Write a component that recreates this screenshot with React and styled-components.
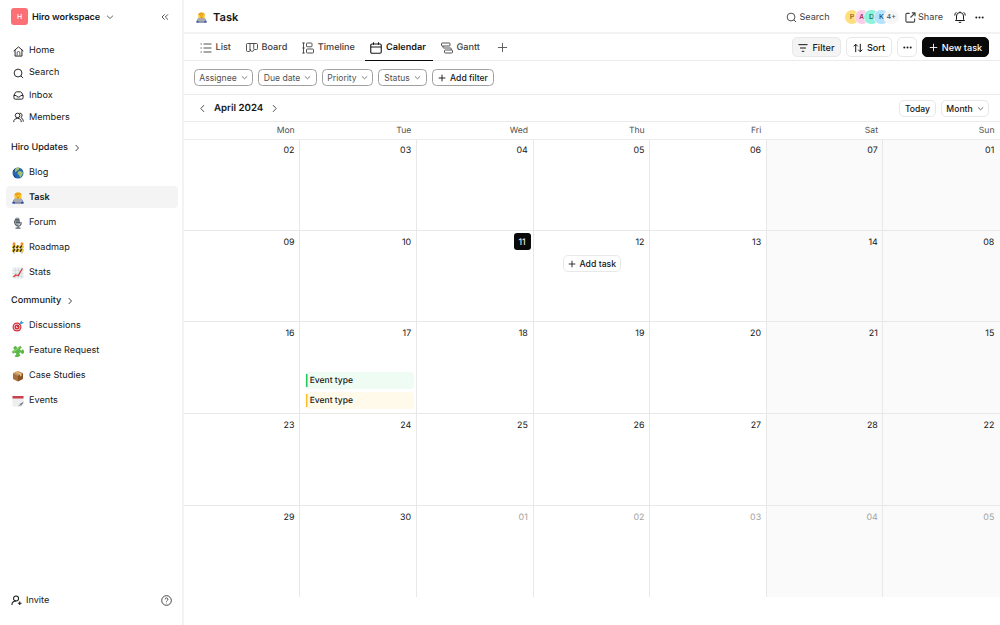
import React from "react";
import styled, { createGlobalStyle } from "styled-components";

const strokes = {
  home: (
    <>
      <path d="M1.500 11 12 2l10.500 9M4.500 9v13h15V9" />
      <path d="M9 21v-6a3 3 0 0 1 6 0v6" strokeWidth="1.500" />
    </>
  ),
  search: (
    <>
      <circle cx="11" cy="11" r="8.500" />
      <path d="m17 17 5 5" />
    </>
  ),
  inbox: (
    <>
      <path d="M2 12 5 6Q6 4 8 4h8q2 0 3 2l3 6v5q0 3-3 3H5q-3 0-3-3z" />
      <path d="M2 12h5q1 3.500 5 3.500t5-3.500h5" />
    </>
  ),
  members: (
    <>
      <circle cx="10" cy="7.500" r="5" />
      <path d="M1.500 22c0-5 3-8 8.500-8s8 3 8 8M14.500 2.500a5 5 0 0 1 2.500 9.500c3 1.500 5.500 4.500 5.500 9" />
    </>
  ),
  invite: (
    <>
      <circle cx="11" cy="7.500" r="5.500" />
      <path d="M2 22c0-5 3.500-9 9-9M19 14v8M15 18h8" />
    </>
  ),
  help: (
    <>
      <circle cx="12" cy="12" r="10.500" />
      <path d="M9 9.500a3 3 0 1 1 4.500 2.600c-1 .6-1.500 1.100-1.500 2.200M12 17v1.200" />
    </>
  ),
  down: <path d="m3 8 9 8.500L21 8" />,
  right: <path d="m8 3 8.500 9L8 21" />,
  left: <path d="m16 3-8.500 9 8.500 9" />,
  collapse: <path d="m11 4-8 8 8 8M21 4l-8 8 8 8" />,
  list: <path d="M7 4h16M7 12h16M7 20h16M1 4h2.500M1 12h2.500M1 20h2.500" />,
  board: (
    <path d="M3 3h18q2 0 2 2v8q0 2-2 2h-4q-1.500 0-1.500-1.500V3M3 3q-2 0-2 2v12q0 2 2 2h3q2 0 2-2V3M8.500 14v1.500q0 3 2.500 3h2q2.500 0 2.500-3" />
  ),
  timeline: (
    <>
      <path d="M3 1.500v21M0.500 2h5M0.500 12h5M0.500 22h5" />
      <rect x="9" y="2" width="11" height="7.500" rx="1.500" />
      <rect x="9" y="14" width="14" height="8" rx="1.500" />
    </>
  ),
  calendar: (
    <>
      <rect x="1.500" y="4" width="21" height="18.500" rx="2.500" />
      <path d="M1.500 10h21M7 0.500v5M17 0.500v5" />
    </>
  ),
  gantt: (
    <>
      <rect x="1" y="2" width="17" height="6" rx="1.500" />
      <rect x="7" y="16" width="16" height="6" rx="1.500" />
      <path d="M4 8v2.500q0 1.500 1.500 1.500H19q1.500 0 1.500 1.500V16" />
    </>
  ),
  plus: <path d="M12 2v20M2 12h20" />,
  filter: <path d="M1 4h22M5 12h14M9 20h6" />,
  sort: <path d="M6.500 22V3M1.500 8l5-5 5 5M17.500 2v19M12.500 16l5 5 5-5" />,
  share: (
    <path d="M10 3H4.500Q2 3 2 5.500v14Q2 22 4.500 22h14q2.500 0 2.500-2.500V14M15 2h7v7M22 2 12 12" />
  ),
  bell: (
    <path d="M5 16.500V10a7 7 0 0 1 14 0v6.500l2 2.500H3zM9.500 22.500h5M12 3V1M1.500 9q0-4 3-6.500M22.500 9q0-4-3-6.500" />
  ),
  dots: (
    <g fill="currentColor" stroke="none">
      <circle cx="3.500" cy="12" r="2.600" />
      <circle cx="12" cy="12" r="2.600" />
      <circle cx="20.500" cy="12" r="2.600" />
    </g>
  ),
};

const Icon = ({ name, size = 11, weight = 2 }) => (
  <Svg
    width={size}
    height={size}
    viewBox="0 0 24 24"
    fill="none"
    stroke="currentColor"
    strokeWidth={weight}
    strokeLinejoin="round"
  >
    {strokes[name]}
  </Svg>
);

const pictures = {
  globe: (
    <>
      <circle cx="12" cy="12" r="11" fill="#2467b4" />
      <path d="M3 15q3 1 5 7-5-2-5-7M2 8q4-6 8-6l-4 8z" fill="#153a78" />
      <path d="M7 3q4-3 8-1l-2 4-4 2-1 3-3-3zM12 9l5-1 5 3-2 6-4 4-2-5-3-2z" fill="#a2c06c" />
    </>
  ),
  coder: (
    <>
      <path d="M1 23q0-10 11-10t11 10z" fill="#5573c0" />
      <path d="M5 7q0-6 7-6t7 6v3q0 6-7 6t-7-6z" fill="#ffc62b" />
      <path d="M5 7q0-6 7-6t7 6l-3-2-5 1z" fill="#e9a01a" />
      <path d="M9 8h1.500M13.500 8H15M10 11.500h4" stroke="#a06a14" strokeWidth="1.500" />
      <path d="M4 13h16l1 8H3z" fill="#a9abaf" />
      <path d="M6 21h12v2H6z" fill="#8a8d92" />
      <path d="M1 20h5v3H1zM18 20h5v3h-5z" fill="#33479f" />
    </>
  ),
  mic: (
    <>
      <rect x="6" y="1" width="10" height="15" rx="5" fill="#98a2a9" transform="rotate(-10 11 8)" />
      <path d="M6 5h8M7 8h8M8 11h8" stroke="#3d4449" strokeWidth="1.500" />
      <path d="M5 7q0 11 8 11 6 0 5-8M12 18v4M7 22h10" fill="none" stroke="#59636a" strokeWidth="2.500" />
    </>
  ),
  barrier: (
    <>
      <path d="M4 5v18M20 5v18" stroke="#8b8a83" strokeWidth="2" />
      <path d="M0 7h24v5.500H0zM0 14h24v5.500H0z" fill="#ffd035" />
      <path d="M2 12.500 5.500 7M9 12.500 12.500 7M16 12.500 19.500 7M2 19.500 5.500 14M9 19.500l3.500-5.500M16 19.500l3.500-5.500" stroke="#332f20" strokeWidth="2.800" />
      <circle cx="4" cy="3.500" r="3" fill="#f28a30" />
      <circle cx="20" cy="3.500" r="3" fill="#f28a30" />
    </>
  ),
  chart: (
    <>
      <rect x="1" y="1" width="22" height="22" fill="#e9eff2" />
      <path d="M1 7h22M1 13h22M1 19h22M7 1v22M13 1v22M19 1v22" stroke="#c9d5da" />
      <path d="M3 20l4-4 6 1 4-8 4-6" fill="none" stroke="#d8393c" strokeWidth="2.500" />
    </>
  ),
  target: (
    <>
      <circle cx="10" cy="14" r="9" fill="#d8313b" />
      <circle cx="10" cy="14" r="6.500" fill="#f3dcdd" />
      <circle cx="10" cy="14" r="5" fill="#d8313b" />
      <circle cx="10" cy="14" r="2" fill="#f3dcdd" />
      <path d="M10 14l8-8" stroke="#5d5360" strokeWidth="1.800" />
      <path d="M16 8V4l4-3v3h4l-4 4z" fill="#3da4d8" />
    </>
  ),
  puzzle: (
    <g transform="rotate(-35 12 12)">
      <path d="M1 6h7q-2-5.500 3-5.500T14 6h8v5q-5-1-5 2t5 2v7h-7q1-5-2-5t-2 5H1v-6q5 1 5-2.500T1 11z" fill="#5eb94a" />
      <path d="M4 8h14" stroke="#93da73" strokeWidth="2" />
    </g>
  ),
  box: (
    <>
      <path d="M2 6l10-4 10 4-10 5z" fill="#c79158" />
      <path d="M2 6l10 5v12L2 18z" fill="#a86f39" />
      <path d="M22 6l-10 5v12l10-5z" fill="#875425" />
      <path d="M6 4l10 5v4l3-1V7L9 3z" fill="#e1bd86" />
    </>
  ),
  notepad: (
    <>
      <path d="M1 2h22v14l-6 7H1z" fill="#eceeef" />
      <path d="M1 2h22v5H1z" fill="#c8414a" />
      <path d="M23 16h-6v7z" fill="#8f969b" />
      <path d="M13 22l10-8" stroke="#666c71" strokeWidth="1.500" />
    </>
  ),
};

const Picture = ({ name, size = 12 }) => (
  <Svg width={size} height={size} viewBox="0 0 24 24">
    {pictures[name]}
  </Svg>
);

const mainLinks = [
  ["home", "Home"],
  ["search", "Search"],
  ["inbox", "Inbox"],
  ["members", "Members"],
];

const updates = [
  ["globe", "Blog"],
  ["coder", "Task"],
  ["mic", "Forum"],
  ["barrier", "Roadmap"],
  ["chart", "Stats"],
];

const community = [
  ["target", "Discussions"],
  ["puzzle", "Feature Request"],
  ["box", "Case Studies"],
  ["notepad", "Events"],
];

const tabs = [
  ["list", "List", 43],
  ["board", "Board", 53.3],
  ["timeline", "Timeline", 65.7],
  ["calendar", "Calendar", 68],
  ["gantt", "Gantt", 53],
];

const filters = [
  ["Assignee", 59],
  ["Due date", 59],
  ["Priority", 51],
  ["Status", 49],
];

const people = [
  ["P", "#fddf7d", "#78591b"],
  ["A", "#fbcbe8", "#91185d"],
  ["D", "#8ff3dc", "#175f58"],
  ["K", "#b5e2fd", "#17507e"],
];

const weekdays = ["Mon", "Tue", "Wed", "Thu", "Fri", "Sat", "Sun"];

const weeks = [
  ["02", "03", "04", "05", "06", "07", "01"],
  ["09", "10", "11", "12", "13", "14", "08"],
  ["16", "17", "18", "19", "20", "21", "15"],
  ["23", "24", "25", "26", "27", "28", "22"],
  ["29", "30", "01", "02", "03", "04", "05"],
];

const Sidebar = () => (
  <Side>
    <Workspace>
      <Logo>H</Logo>
      <WorkspaceName>Hiro workspace</WorkspaceName>
      <Icon name="down" size={8} />
      <Collapse>
        <Icon name="collapse" size={8} weight={2.2} />
      </Collapse>
    </Workspace>
    <MainNav>
      {mainLinks.map(([icon, label]) => (
        <MainLink key={label}>
          <Icon name={icon} size={11} weight={2} />
          {label}
        </MainLink>
      ))}
    </MainNav>
    <Section>
      <SectionTitle>
        Hiro Updates <Icon name="right" size={8} weight={2.4} />
      </SectionTitle>
      {updates.map(([icon, label]) => (
        <Item key={label} $active={label === "Task"}>
          <Picture name={icon} />
          {label}
        </Item>
      ))}
    </Section>
    <Section>
      <SectionTitle>
        Community <Icon name="right" size={8} weight={2.4} />
      </SectionTitle>
      {community.map(([icon, label]) => (
        <Item key={label}>
          <Picture name={icon} />
          {label}
        </Item>
      ))}
    </Section>
    <SideFooter>
      <Icon name="invite" size={11} weight={2.2} />
      <span>Invite</span>
      <Icon name="help" size={11} weight={1.7} />
    </SideFooter>
  </Side>
);

const Calendar = () => (
  <>
    <Weekdays>
      {weekdays.map((day) => (
        <Weekday key={day}>{day}</Weekday>
      ))}
    </Weekdays>
    <Grid>
      {weeks.map((week, w) =>
        week.map((day, d) => (
          <Cell key={`${w}-${d}`} $weekend={d > 4} $last={w === 4}>
            <Day $today={w === 1 && d === 2} $muted={w === 4 && d > 1}>
              {day}
            </Day>
            {w === 1 && d === 3 && (
              <AddTask>
                <Icon name="plus" size={8} weight={2.6} />
                Add task
              </AddTask>
            )}
            {w === 2 && d === 1 && (
              <Events>
                <Event $bar="#22c55e" $bg="#effcf4">
                  Event type
                </Event>
                <Event $bar="#fbbf24" $bg="#fffae9">
                  Event type
                </Event>
              </Events>
            )}
          </Cell>
        ))
      )}
    </Grid>
  </>
);

const App = () => (
  <Container>
    <Global />
    <Sidebar />
    <Main>
      <TopBar>
        <Picture name="coder" size={11} />
        <Title>Task</Title>
        <TopActions>
          <TopLink>
            <Icon name="search" size={11} />
            Search
          </TopLink>
          <Avatars>
            {people.map(([letter, bg, color]) => (
              <Avatar key={letter} $bg={bg} $color={color}>
                {letter}
              </Avatar>
            ))}
            <Avatar $bg="#f6f6f6" $color="#555">
              4+
            </Avatar>
          </Avatars>
          <TopLink>
            <Icon name="share" size={11} weight={2.4} />
            Share
          </TopLink>
          <Icon name="bell" size={12} weight={2} />
          <Icon name="dots" size={9} />
        </TopActions>
      </TopBar>
      <TabBar>
        {tabs.map(([icon, label, width]) => (
          <Tab key={label} $width={width} $active={label === "Calendar"}>
            <Icon name={icon} size={12} weight={label === "Calendar" ? 2.2 : 1.8} />
            {label}
          </Tab>
        ))}
        <NewTab>
          <Icon name="plus" size={11} weight={2} />
        </NewTab>
        <Actions>
          <Button $width={49} $filled>
            <Icon name="filter" size={10} weight={2.4} />
            Filter
          </Button>
          <Button $width={46}>
            <Icon name="sort" size={10} weight={2.4} />
            Sort
          </Button>
          <Button $width={20}>
            <Icon name="dots" size={9} />
          </Button>
          <Button $width={67} $dark>
            <Icon name="plus" size={9} weight={2.4} />
            New task
          </Button>
        </Actions>
      </TabBar>
      <FilterBar>
        {filters.map(([label, width]) => (
          <Pill key={label} $width={width}>
            {label}
            <Icon name="down" size={7} weight={2.6} />
          </Pill>
        ))}
        <Pill $width={62} $strong>
          <Icon name="plus" size={8} weight={2.8} />
          Add filter
        </Pill>
      </FilterBar>
      <MonthBar>
        <Icon name="left" size={9} weight={2} />
        <MonthName>April 2024</MonthName>
        <Icon name="right" size={9} weight={2} />
        <MonthActions>
          <SmallButton $width={37}>Today</SmallButton>
          <SmallButton $width={48}>
            Month
            <Icon name="down" size={7} weight={2.2} />
          </SmallButton>
        </MonthActions>
      </MonthBar>
      <Calendar />
    </Main>
  </Container>
);

export default App;

const Global = createGlobalStyle`
  * {
    box-sizing: border-box;
  }

  body {
    margin: 0;
    background: #fff;
    text-rendering: geometricPrecision;
  }
`;

const Svg = styled.svg`
  display: block;
  flex: none;
`;

const Container = styled.div`
  display: flex;
  width: 1000px;
  height: 625px;
  overflow: hidden;
  background: #fff;
  color: #171717;
  font-family: Inter, "Liberation Sans", sans-serif;
  font-size: 9.15px;
  line-height: 12px;
  white-space: nowrap;
`;

const Side = styled.aside`
  display: flex;
  flex-direction: column;
  width: 184px;
  flex: none;
  border-right: 2px solid #f3f3f3;
`;

const Workspace = styled.div`
  display: flex;
  align-items: center;
  height: 33px;
  margin-bottom: 1px;
  padding: 0 13px 0 11px;
`;

const Logo = styled.div`
  display: flex;
  align-items: center;
  justify-content: center;
  width: 17px;
  height: 17px;
  margin-right: 4px;
  border-radius: 3px;
  background: #fb7074;
  color: #fff;
  font-size: 7px;
  font-weight: 500;
`;

const WorkspaceName = styled.div`
  margin-right: 6px;
  padding-top: 2px;
  font-weight: 600;
  letter-spacing: -0.08px;
`;

const Collapse = styled.div`
  margin-left: auto;
`;

const MainNav = styled.nav`
  padding: 6px 0 4px 12.5px;
`;

const MainLink = styled.div`
  display: flex;
  align-items: center;
  gap: 5.5px;
  height: 22.25px;
`;

const Section = styled.section`
  padding: 3px 4px 0 6px;
`;

const SectionTitle = styled.div`
  display: flex;
  align-items: center;
  gap: 5px;
  height: 22px;
  margin-bottom: 3px;
  padding: 2px 0 0 5px;
  font-weight: 500;
`;

const Item = styled.div`
  display: flex;
  align-items: center;
  gap: 5px;
  height: 22px;
  margin: 0 0 3px;
  padding: 2px 0 0 6px;
  border-radius: 4px;
  background: ${({ $active }) => ($active ? "#f4f4f4" : "transparent")};
  font-weight: ${({ $active }) => ($active ? 600 : 400)};
`;

const SideFooter = styled.footer`
  display: flex;
  align-items: center;
  gap: 4px;
  height: 20px;
  margin: auto 10px 15px 11px;

  span {
    flex: 1;
    padding-top: 2px;
  }
`;

const Main = styled.main`
  flex: 1;
  min-width: 0;
`;

const TopBar = styled.header`
  display: flex;
  align-items: center;
  gap: 6px;
  height: 34px;
  padding: 2px 16px 0 12px;
  border-bottom: 2px solid #f2f2f2;
`;

const Title = styled.h1`
  margin: 0;
  font-size: 11.1px;
  font-weight: 600;
`;

const TopActions = styled.div`
  display: flex;
  align-items: center;
  margin-left: auto;
  gap: 9px;
`;

const TopLink = styled.div`
  display: flex;
  align-items: center;
  gap: 2.5px;
  margin-right: 2px;
  padding-top: 1px;
  color: #404040;
`;

const Avatars = styled.div`
  display: flex;
  margin: 0 -3px 0 4px;
`;

const Avatar = styled.div`
  display: flex;
  align-items: center;
  justify-content: center;
  width: 14.6px;
  height: 14.6px;
  margin-right: -4.8px;
  border-radius: 50%;
  background: ${({ $bg }) => $bg};
  color: ${({ $color }) => $color};
  font-size: 7px;
  font-weight: 500;
  box-shadow: 0 0 0 0.5px #fff;

  &:last-child {
    margin-right: 0;
  }
`;

const TabBar = styled.div`
  display: flex;
  align-items: center;
  height: 27px;
  padding: 0 11px 0 10px;
  border-bottom: 1px solid #ebebeb;
`;

const Tab = styled.div`
  display: flex;
  align-items: center;
  align-self: flex-start;
  gap: 3.5px;
  width: ${({ $width }) => $width}px;
  height: 27px;
  margin: 0 ${({ $active }) => ($active ? 2 : 3)}px 0 0;
  padding: 1px 0 0 ${({ $active }) => ($active ? 5.5 : 6)}px;
  color: ${({ $active }) => ($active ? "#171717" : "#404040")};
  font-weight: ${({ $active }) => ($active ? 600 : 500)};
  box-shadow: ${({ $active }) => ($active ? "inset 0 -1px #0a0a0a" : "none")};
`;

const NewTab = styled.div`
  margin-left: 6px;
  color: #555;
`;

const Actions = styled.div`
  display: flex;
  gap: 5px;
  margin-left: auto;
`;

const Button = styled.button`
  display: flex;
  align-items: center;
  justify-content: center;
  gap: 4px;
  width: ${({ $width }) => $width}px;
  height: 20px;
  padding: 1px 0 0;
  border: 1px solid ${({ $dark }) => ($dark ? "#0a0a0a" : "#e8e8e8")};
  border-radius: 5px;
  background: ${({ $dark, $filled }) =>
    $dark ? "#0a0a0a" : $filled ? "#f4f4f4" : "#fff"};
  color: ${({ $dark }) => ($dark ? "#fff" : "#171717")};
  font: inherit;
  font-weight: 500;
`;

const FilterBar = styled.div`
  display: flex;
  align-items: center;
  gap: 5px;
  height: 34px;
  padding-left: 10px;
  border-bottom: 1px solid #ebebeb;
`;

const Pill = styled.button`
  display: flex;
  align-items: center;
  justify-content: center;
  gap: 4px;
  width: ${({ $width }) => $width}px;
  height: 17px;
  padding: 0;
  border: 1px solid #a0a0a0;
  border-radius: 4.5px;
  background: #fff;
  color: ${({ $strong }) => ($strong ? "#171717" : "#525252")};
  font: inherit;
  font-size: 8.6px;
  font-weight: ${({ $strong }) => ($strong ? 500 : 400)};
`;

const MonthBar = styled.div`
  display: flex;
  align-items: center;
  height: 27px;
  padding: 1px 11px 0 14px;
  border-bottom: 1px solid #ebebeb;
`;

const MonthName = styled.div`
  margin: 0 6.5px 0 7px;
  padding-top: 1px;
  font-size: 9.7px;
  font-weight: 600;
`;

const MonthActions = styled.div`
  display: flex;
  gap: 5px;
  margin-left: auto;
`;

const SmallButton = styled(Button)`
  height: 17px;
  padding: 0;
  font-size: 8.6px;
`;

const Weekdays = styled.div`
  display: grid;
  grid-template-columns: 116.2px repeat(5, 116.67px) 1fr;
  height: 18px;
  border-bottom: 1px solid #ebebeb;
`;

const Weekday = styled.div`
  padding-right: 5.5px;
  color: #525252;
  font-size: 8.6px;
  line-height: 18px;
  text-align: right;
`;

const Grid = styled.div`
  display: grid;
  grid-template-columns: 116.2px repeat(5, 116.67px) 1fr;
  grid-template-rows: 91px 91px 92px 92px 91px;
`;

const Cell = styled.div`
  display: flex;
  flex-direction: column;
  border-right: 1px solid #e8e8e8;
  border-bottom: ${({ $last }) => ($last ? 0 : "1px solid #e8e8e8")};
  background: ${({ $weekend }) => ($weekend ? "#fafafa" : "#fff")};

  &:nth-child(7n) {
    border-right: 0;
  }

  &:nth-child(7n) > div {
    margin-right: 3px;
  }
`;

const Day = styled.div`
  align-self: flex-end;
  min-width: 17px;
  height: 17px;
  margin: 2px 2px 0 0;
  padding-right: ${({ $today }) => ($today ? 0 : 2.7)}px;
  border-radius: 3px;
  background: ${({ $today }) => ($today ? "#0a0a0a" : "transparent")};
  color: ${({ $today, $muted }) =>
    $today ? "#fff" : $muted ? "#a3a3a3" : "#171717"};
  font-size: 8.9px;
  line-height: 19px;
  text-align: ${({ $today }) => ($today ? "center" : "right")};

  ${Cell}:nth-child(-n + 7) > & {
    line-height: 17px;
  }
`;

const AddTask = styled(Button)`
  align-self: center;
  width: 58px;
  height: 17px;
  margin: 5px 0 0 1px;
  padding: 0;
  font-size: 8.7px;
`;

const Events = styled.div`
  display: flex;
  flex-direction: column;
  gap: 3px;
  margin: 31px 2px 0 5px;
`;

const Event = styled.div`
  height: 17px;
  padding-left: 4.5px;
  border-radius: 4px;
  background: linear-gradient(${({ $bar }) => $bar}, ${({ $bar }) => $bar})
    0.5px 50% / 1.5px 13px no-repeat ${({ $bg }) => $bg};
  font-size: 8.5px;
  font-weight: 500;
  line-height: 18px;
`;
